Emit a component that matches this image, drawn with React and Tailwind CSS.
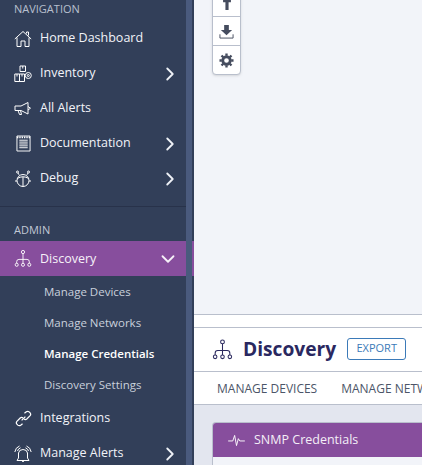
import React from "react";
import { ChevronRight, ChevronDown } from "lucide-react";

const Net = ({ className, color = "currentColor", sw = "1.2" }) => (
  <svg viewBox="0 0 20 20" className={className} fill="none" stroke={color} strokeWidth={sw}>
    <circle cx="10" cy="2.8" r="1.8" />
    <path d="M10 4.6V15.300M3 15.300V13.500Q3 11 5.500 11H14.500Q17 11 17 13.500V15.300" />
    <circle cx="3" cy="17" r="1.7" />
    <circle cx="10" cy="17" r="1.7" />
    <circle cx="17" cy="17" r="1.7" />
  </svg>
);
const Home = () => (
  <svg viewBox="0 0 18 18" className="w-[18px] h-[18px]" fill="none" stroke="#fff" strokeWidth="1">
    <path d="M.8 9L9 1.500L17.200 9M3 7.500V16.500H7V11H11V16.500H15V7.500M12.500 3.500V2H14.500V5.500" />
  </svg>
);
const Boxes = () => (
  <svg viewBox="0 0 18 18" className="w-[18px] h-[18px]" fill="none" stroke="#fff" strokeWidth="1">
    <path d="M6 1H11.500V6.500H6zM8.750 1V3.500" />
    <path d="M.8 9H5.500V16.500H.8zM5.500 9H10.500V16.500H5.500zM3 9V11.500M8 9V11.500" />
    <circle cx="14.300" cy="10.500" r="3" />
    <circle cx="14.300" cy="10.500" r="1" />
  </svg>
);
const Horn = () => (
  <svg viewBox="0 0 18 18" className="w-[18px] h-[18px]" fill="none" stroke="#fff" strokeWidth="1">
    <path d="M1 6H7L14 2.500V14L7 10.500H1zM14 6.500L16.500 8.200L14 10M4 10.500L5.500 14.500H7.500L6.500 10.500" />
  </svg>
);
const Doc = () => (
  <svg viewBox="0 0 16 18" className="w-[15px] h-[17px]" fill="none" stroke="#fff" strokeWidth="1">
    <path d="M1 1H15V17H1z" />
    <path d="M3.500 5.500H12.500M3.500 7.500H12.500M3.500 9.500H12.500M3.500 11.500H12.500M3.500 13.500H12.500" />
    <path d="M1 2.500H15" strokeWidth="2" strokeDasharray="1.500 1" />
  </svg>
);
const Bug = () => (
  <svg viewBox="0 0 18 18" className="w-[18px] h-[18px]" fill="none" stroke="#fff" strokeWidth="1">
    <ellipse cx="9" cy="10.500" rx="6" ry="6" />
    <path d="M9 7V16.500M3.300 8.500Q9 5 14.700 8.500M1 11H3M15 11H17M5 4.800L4 3M13 4.800L14 3" />
    <circle cx="3.500" cy="2" r="1" />
    <circle cx="14.500" cy="2" r="1" />
  </svg>
);
const Link = () => (
  <svg viewBox="0 0 18 18" className="w-[17px] h-[17px]" fill="none" stroke="#fff" strokeWidth="1.300">
    <path d="M10 3.500L12 1.800Q13.500 .8 15 2L16 3Q17.200 4.500 16 6L12.500 9.500Q11 10.800 9.500 9.500" />
    <path d="M8 14.500L6 16.200Q4.500 17.200 3 16L2 15Q.8 13.500 2 12L5.500 8.500Q7 7.200 8.500 8.500" />
    <path d="M7 11L11 7" />
  </svg>
);
const Bell = () => (
  <svg viewBox="0 0 18 18" className="w-[18px] h-[18px]" fill="none" stroke="#fff" strokeWidth="1">
    <path d="M3 15.500H15L13.500 13V8Q13 4.500 9 4.500Q5 4.500 4.500 8V13zM7.500 15.500Q9 18 10.500 15.500" />
    <path d="M.8 7Q1.500 2.500 5.500 1M17.200 7Q16.500 2.500 12.500 1M3.500 6Q4 3.800 6.500 2.800M14.500 6Q14 3.800 11.500 2.800" />
  </svg>
);

const Row = ({ icon, label, arrow }) => (
  <div className="flex items-center h-[35px] shrink-0 pl-[14px] pr-[13px] text-[12.5px] text-[#f1f3f8]">
    <span className="w-[18px] flex justify-center shrink-0">{icon}</span>
    <span className="ml-[8px] flex-1">{label}</span>
    {arrow && <ChevronRight size={22} strokeWidth={2} className="text-[#eef1f6] shrink-0" />}
  </div>
);

const Sub = ({ label, active }) => (
  <div className={`h-[31px] shrink-0 pl-[44px] flex items-center text-[11.5px] ${active ? "text-white font-semibold" : "text-[#c9d0dc]"}`}>
    {label}
  </div>
);

export default function App() {
  return (
    <div className="w-[422px] h-[465px] overflow-hidden flex bg-[#f2f4f9]" style={{ fontFamily: '"Open Sans", sans-serif' }}>
      <aside className="w-[194px] h-full shrink-0 bg-[#323f59] relative flex flex-col overflow-hidden">
        <div className="h-[20px] shrink-0 -mt-[1px] mb-[2px] pl-[14px] flex items-center text-[11px] text-[#b8c0cf]">NAVIGATION</div>
        <Row icon={<Home />} label="Home Dashboard" />
        <Row icon={<Boxes />} label="Inventory" arrow />
        <Row icon={<Horn />} label="All Alerts" />
        <Row icon={<Doc />} label="Documentation" arrow />
        <Row icon={<Bug />} label="Debug" arrow />
        <div className="w-[186px] shrink-0 mt-[10px] border-t border-[#28324a]" />
        <div className="h-[34px] shrink-0 pt-[12px] pl-[14px] flex items-center text-[11px] text-[#c1c8d5]">ADMIN</div>
        <div className="h-[35px] shrink-0 flex items-center pl-[14px] pr-[15px] bg-[#874e9d] text-[12.5px] text-[#f6f1f8]">
          <Net className="w-[18px] h-[19px] shrink-0" color="#fff" sw="1" />
          <span className="ml-[8px] flex-1 pt-[1px]">Discovery</span>
          <ChevronDown size={22} strokeWidth={2} className="shrink-0" />
        </div>
        <Sub label="Manage Devices" />
        <Sub label="Manage Networks" />
        <Sub label="Manage Credentials" active />
        <Sub label="Discovery Settings" />
        <div className="h-[1px] shrink-0" />
        <Row icon={<Link />} label="Integrations" />
        <Row icon={<Bell />} label="Manage Alerts" arrow />
        <div className="absolute left-[186px] top-0 bottom-0 w-[6px] bg-[#4a5a7d]" />
      </aside>
      <main className="flex-1 min-w-0 flex flex-col">
        <div className="h-[314px] shrink-0 relative">
          <div className="absolute left-[18px] -top-[14px] w-[29px] rounded-b-[4px] border border-[#b9bfcc] bg-white flex flex-col shadow-sm">
            <div className="h-[30px] flex items-end justify-center pb-[6px] border-b border-[#b9bfcc]">
              <svg viewBox="0 0 12 14" className="w-[10px] h-[11px]" fill="#454c5e"><path d="M1 0H11V4H8V14H4V4H1z" /></svg>
            </div>
            <div className="h-[29px] flex items-center justify-center border-b border-[#b9bfcc]">
              <svg viewBox="0 0 16 16" className="w-[15px] h-[15px]" fill="#454c5e"><path d="M5.500 1H10.500V6.500H14L8 12L2 6.500H5.500z" /><path d="M1 11V15H15V11" fill="none" stroke="#454c5e" strokeWidth="1" /></svg>
            </div>
            <div className="h-[28px] flex items-center justify-center">
              <svg viewBox="0 0 16 16" className="w-[15px] h-[15px]" fill="none" stroke="#454c5e">
                <circle cx="8" cy="8" r="4" strokeWidth="3" />
                <path d="M8 .5V3M8 13V15.500M.5 8H3M13 8H15.500M2.700 2.700L4.500 4.500M11.500 11.500L13.300 13.300M2.700 13.300L4.500 11.500M11.500 4.500L13.300 2.700" strokeWidth="2.500" />
              </svg>
            </div>
          </div>
        </div>
        <div className="h-[14px] shrink-0 bg-white border-y border-[#b9bfcc]" />
        <div className="h-[44px] shrink-0 bg-white border-b border-[#b9bfcc] flex items-center pl-[18px]">
          <Net className="w-[21px] h-[21px] shrink-0" color="#2c2a5f" sw="1" />
          <span className="ml-[10px] text-[19.2px] font-bold text-[#2a2860]">Discovery</span>
          <span className="ml-[11px] w-[59px] h-[22px] -mt-[2px] border border-[#3b7ab8] rounded-[3px] flex items-center justify-center text-[11px] text-[#3b7ab8]">EXPORT</span>
        </div>
        <div className="h-[33px] shrink-0 bg-white border-b border-[#b9bfcc] flex items-center pl-[23px] pt-[1px] gap-[24px] text-[12px] text-[#4c5568] whitespace-nowrap overflow-hidden">
          <span>MANAGE DEVICES</span>
          <span>MANAGE NETWORKS</span>
        </div>
        <div className="flex-1 bg-[#e3e6ef] pl-[18px] pt-[17px] overflow-hidden">
          <div className="h-[60px] rounded-tl-[4px] border-l border-t border-[#b9bfcc] bg-[#f2f4f9] overflow-hidden">
            <div className="h-[34px] bg-[#874e9d] flex items-center pl-[15px] text-[12.5px] text-[#f4eef7]">
              <svg viewBox="0 0 18 14" className="w-[17px] h-[13px]" fill="none" stroke="#fff" strokeWidth="1"><path d="M0 7.500H5L7 1.500L9 12.500L11 5L12.500 7.500H18" /></svg>
              <span className="ml-[9px] pt-[1px]">SNMP Credentials</span>
            </div>
          </div>
        </div>
      </main>
    </div>
  );
}
